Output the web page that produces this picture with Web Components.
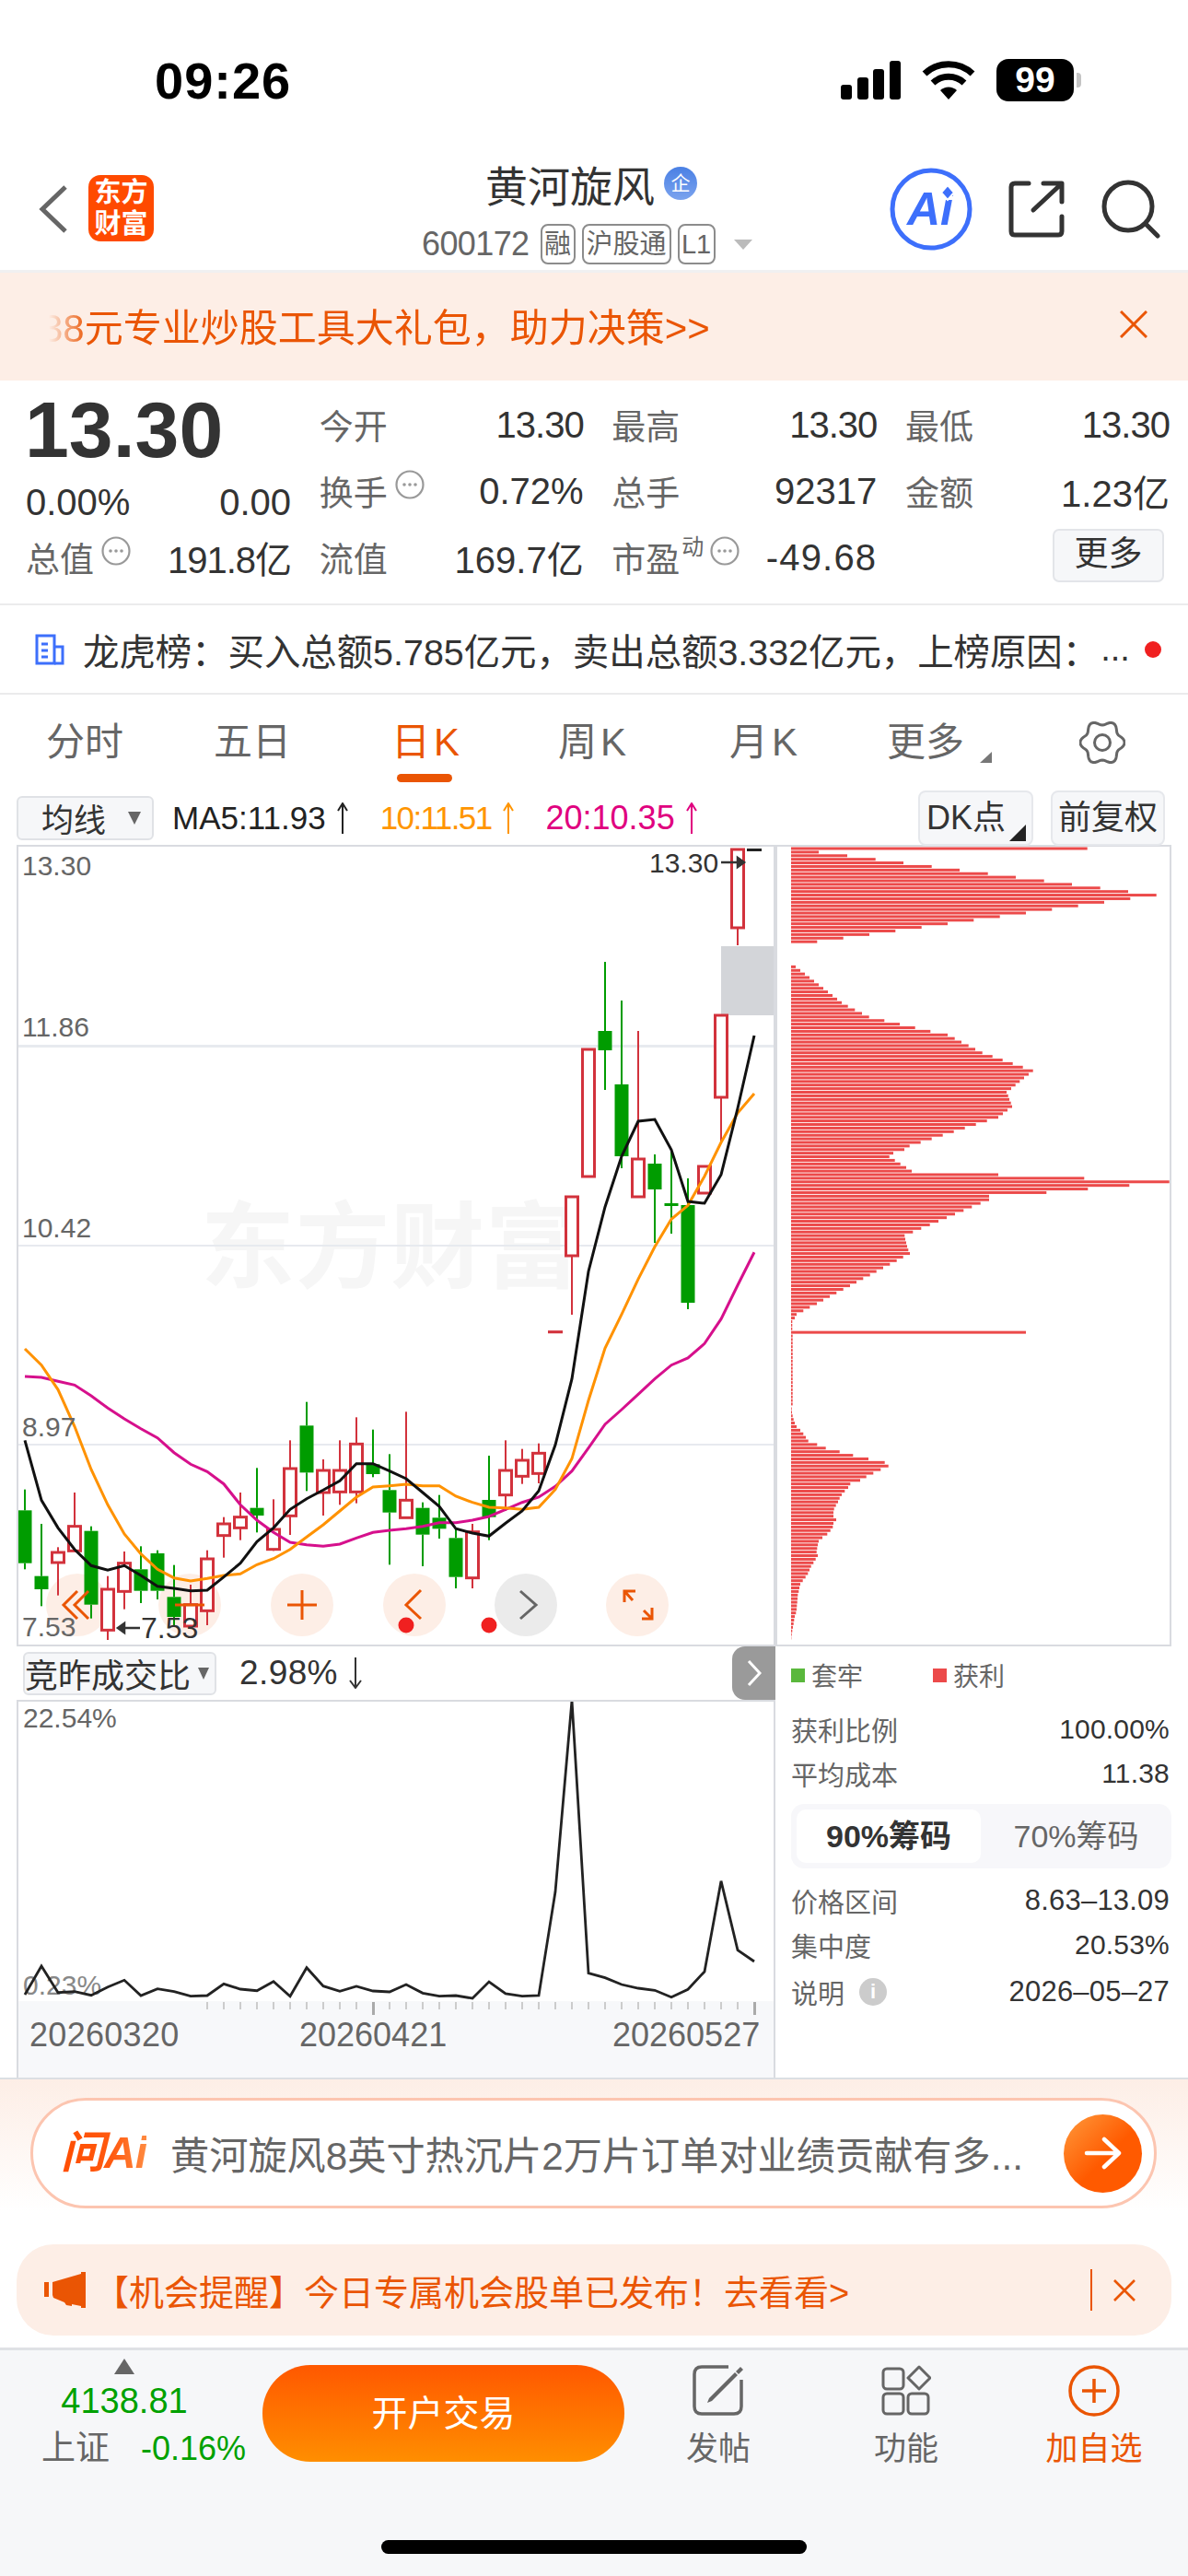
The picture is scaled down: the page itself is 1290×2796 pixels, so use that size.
<!DOCTYPE html>
<html lang="zh-CN">
<head>
<meta charset="utf-8">
<title>黄河旋风</title>
<style>
  html, body { margin: 0; padding: 0; background: #fff; }
  body {
    width: 1290px;
    height: 2796px;
    overflow: hidden;
    color: #333;
    font-family: "Liberation Sans", "Noto Sans CJK SC", sans-serif;
  }
</style>
</head>
<body>
<status-bar></status-bar>
<stock-header></stock-header>
<promo-banner></promo-banner>
<quote-panel></quote-panel>
<news-row></news-row>
<period-tabs></period-tabs>
<ma-toolbar></ma-toolbar>
<kline-area>
  <kline-chart slot="left"></kline-chart>
  <sub-toolbar slot="left"></sub-toolbar>
  <ratio-chart slot="left"></ratio-chart>
  <chip-chart slot="right"></chip-chart>
  <chip-stats slot="right"></chip-stats>
</kline-area>
<ask-ai></ask-ai>
<notice-bar></notice-bar>
<bottom-bar></bottom-bar>

<script>
class ShadowBox extends HTMLElement {
  constructor() {
    super();
    this.attachShadow({ mode: 'open' });
  }
  connectedCallback() {
    this.shadowRoot.innerHTML = this.getHTML();
  }
}

class StatusBar extends ShadowBox {
  getHTML() {
    return `
      <style>
        :host { display: flex; align-items: center; height: 160px; padding-top: 15px; box-sizing: border-box; }
        .time { margin-left: 168px; font-size: 56px; font-weight: 700; letter-spacing: 1px; line-height: 1; color: #000; }
        .right { margin-left: auto; margin-bottom: 2px; display: flex; align-items: center; }
        .signal { display: block; margin-right: 23px; }
        .wifi { display: block; margin-right: 23px; }
        .bat { width: 84px; height: 46px; border-radius: 13px; background: #000; color: #fff; font-size: 39px; font-weight: 700; display: flex; align-items: center; justify-content: center; }
        .nub { width: 5px; height: 16px; margin-left: 3px; margin-right: 116px; background: #c4c4c4; border-radius: 0 4px 4px 0; }
      </style>
      <div class="time">09:26</div>
      <div class="right">
        <svg class="signal" width="65" height="42" viewBox="0 0 65 42">
          <rect x="0" y="26" width="12" height="16" rx="3"/>
          <rect x="18" y="18" width="12" height="24" rx="3"/>
          <rect x="35" y="9" width="12" height="33" rx="3"/>
          <rect x="53" y="0" width="12" height="42" rx="3"/>
        </svg>
        <svg class="wifi" width="58" height="42" viewBox="0 0 58 42" fill="none" stroke="#000">
          <path d="M3 14 A38 38 0 0 1 55 14" stroke-width="7"/>
          <path d="M12 24 A25 25 0 0 1 46 24" stroke-width="7"/>
          <path d="M20 32 A13 13 0 0 1 38 32 L29 42 Z" fill="#000" stroke="none"/>
        </svg>
        <div class="bat">99</div>
        <div class="nub"></div>
      </div>
    `;
  }
}

class StockHeader extends ShadowBox {
  getHTML() {
    return `
      <style>
        :host { display: grid; grid-template-columns: 458px 368px 1fr; height: 136px; box-sizing: border-box; border-bottom: 3px solid #f0f0f1; }
        .left { display: flex; align-items: flex-start; }
        .back { display: block; margin: 40px 0 0 41px; }
        .logo { margin: 30px 0 0 22px; width: 71px; height: 72px; border-radius: 13px; background: #ff4a00; color: #fff; font-size: 29px; font-weight: 700; line-height: 34px; text-align: center; padding-top: 2px; box-sizing: border-box; }
        .mid { display: flex; flex-direction: column; align-items: center; }
        .name { display: flex; align-items: center; margin-top: 14px; height: 50px; font-size: 46px; color: #333; }
        .badge { width: 36px; height: 36px; margin-left: 10px; border-radius: 50%; background: linear-gradient(#4a80e4, #7ba3ee); color: #fff; font-size: 21px; line-height: 36px; text-align: center; }
        .sub { display: flex; align-items: center; width: 100%; margin-top: 19px; height: 44px; color: #666; }
        .code { font-size: 36px; margin-right: 12px; letter-spacing: -.6px; }
        .tag { height: 44px; box-sizing: border-box; border: 2px solid #8c8c8c; border-radius: 8px; font-size: 29px; line-height: 40px; text-align: center; margin-right: 7px; }
        .tri { margin-left: 13px; width: 0; height: 0; border-left: 10px solid transparent; border-right: 10px solid transparent; border-top: 11px solid #bbb; }
        .right { display: flex; align-items: flex-start; }
        .ic { display: block; margin-top: 22px; }
      </style>
      <div class="left">
        <svg class="back" width="33" height="54" viewBox="0 0 33 54" fill="none" stroke="#666" stroke-width="5"><path d="M30 3 L5 27 L30 51"/></svg>
        <div class="logo">东方<br>财富</div>
      </div>
      <div class="mid">
        <div class="name">黄河旋风<div class="badge">企</div></div>
        <div class="sub">
          <span class="code">600172</span>
          <span class="tag" style="width:38px">融</span>
          <span class="tag" style="width:97px">沪股通</span>
          <span class="tag" style="width:41px">L1</span>
          <span class="tri"></span>
        </div>
      </div>
      <div class="right">
        <svg class="ic" style="margin-left:140px" width="90" height="90" viewBox="966 182 90 90">
          <circle cx="1011" cy="227" r="42" fill="none" stroke="#3d6ffb" stroke-width="5"/>
          <text x="985" y="244" font-size="50" font-weight="700" font-style="italic" fill="#3d6ffb">Ai</text>
          <path d="M1029 201 L1036 209 L1029 217 L1022 209 Z" fill="#3d6ffb" stroke="#fff" stroke-width="2"/>
        </svg>
        <svg class="ic" style="margin-left:38px;margin-top:35px" width="64" height="64" viewBox="1094 195 64 64" fill="none" stroke="#333" stroke-width="5" stroke-linecap="round" stroke-linejoin="round">
          <path d="M1117 199 H1102 Q1098 199 1098 203 V251 Q1098 255 1102 255 H1149 Q1153 255 1153 251 V235"/>
          <path d="M1122 228 L1152 200 M1133 199 H1153 V219"/>
        </svg>
        <svg class="ic" style="margin-left:38px;margin-top:35px" width="66" height="66" viewBox="1198 195 66 66" fill="none" stroke="#333" stroke-width="5" stroke-linecap="round">
          <circle cx="1227" cy="224" r="26"/>
          <path d="M1247 244 L1259 256"/>
        </svg>
      </div>
    `;
  }
}

class PromoBanner extends ShadowBox {
  getHTML() {
    return `
      <style>
        :host { display: flex; align-items: center; height: 117px; background: #fdeee6; color: #ea5504; }
        .run { margin-left: 45px; margin-bottom: 5px; white-space: nowrap; font-size: 42px; -webkit-mask-image: linear-gradient(90deg, transparent 8px, #000 50px); mask-image: linear-gradient(90deg, transparent 8px, #000 50px); }
        svg { display: block; margin-left: auto; margin-right: 44px; margin-bottom: 5px; }
      </style>
      <span class="run">38元专业炒股工具大礼包，助力决策&gt;&gt;</span>
      <svg width="30" height="30" viewBox="0 0 30 30" fill="none" stroke="#ea5504" stroke-width="3"><path d="M1 1 L29 29 M29 1 L1 29"/></svg>
    `;
  }
}

class QuoteCell extends ShadowBox {
  getHTML() {
    const label = this.getAttribute('label');
    const value = this.getAttribute('value');
    const sup = this.getAttribute('sup');
    const info = this.hasAttribute('info');
    const ls = this.getAttribute('ls') || '0';
    return `
      <style>
        :host { display: flex; align-items: center; justify-content: space-between; height: 72px; }
        .l { display: flex; align-items: center; font-size: 37px; color: #666; }
        .v { font-size: 40px; color: #333; white-space: nowrap; letter-spacing: ${ls}px; }
        sup { font-size: 24px; line-height: 1; margin: 0 4px 22px 2px; color: #666; }
        svg { display: block; margin: 0 0 14px 8px; }
        sup + svg { margin-left: 3px; }
      </style>
      <span class="l">${label}${sup ? `<sup>${sup}</sup>` : ''}${info ? `
        <svg width="32" height="32" viewBox="0 0 32 32" fill="#999"><circle cx="16" cy="16" r="14.5" fill="none" stroke="#999" stroke-width="2.2"/><circle cx="10" cy="16" r="1.8"/><circle cx="16" cy="16" r="1.8"/><circle cx="22" cy="16" r="1.8"/></svg>` : ''}</span>
      <span class="v">${value}</span>
    `;
  }
}

class QuotePanel extends ShadowBox {
  getHTML() {
    return `
      <style>
        :host { display: grid; grid-template-columns: 288px 287px 288px 287px; column-gap: 30.67px; padding: 12px 20px 0 28px; height: 244px; box-sizing: border-box; border-bottom: 2px solid #ebebec; align-content: start; }
        .now { grid-row: 1 / 3; }
        .price { font-size: 86px; font-weight: 700; line-height: 84px; margin: -1px 0 1px -1px; color: #333; }
        .chg { display: flex; justify-content: space-between; margin-top: 15px; font-size: 40px; line-height: 44px; color: #333; }
        .more-cell { display: flex; align-items: flex-start; justify-content: flex-end; }
        .more { width: 121px; height: 58px; box-sizing: border-box; margin: 5px 6px 0 0; border: 2px solid #e3e5e9; border-radius: 7px; background: #f6f7f9; font-size: 37px; line-height: 52px; text-align: center; color: #333; }
      </style>
      <div class="now">
        <div class="price">13.30</div>
        <div class="chg"><span>0.00%</span><span>0.00</span></div>
      </div>
      <quote-cell label="今开" value="13.30" ls="-1"></quote-cell>
      <quote-cell label="最高" value="13.30" ls="-1"></quote-cell>
      <quote-cell label="最低" value="13.30" ls="-1"></quote-cell>
      <quote-cell label="换手" value="0.72%" info></quote-cell>
      <quote-cell label="总手" value="92317"></quote-cell>
      <quote-cell label="金额" value="1.23亿"></quote-cell>
      <quote-cell label="总值" value="191.8亿" info ls="-1"></quote-cell>
      <quote-cell label="流值" value="169.7亿"></quote-cell>
      <quote-cell label="市盈" sup="动" value="-49.68" info ls="1.2"></quote-cell>
      <div class="more-cell"><div class="more">更多</div></div>
    `;
  }
}

class NewsRow extends ShadowBox {
  getHTML() {
    return `
      <style>
        :host { display: flex; align-items: center; height: 97px; box-sizing: border-box; border-bottom: 2px solid #ebebec; padding-left: 37px; }
        svg { display: block; }
        .t { margin-left: 20px; font-size: 39.4px; color: #333; white-space: nowrap; }
        .dots { margin-left: 2px; font-size: 38px; color: #333; }
        .dot { width: 18px; height: 18px; margin-left: 16px; border-radius: 50%; background: #f02020; }
      </style>
      <svg width="33" height="34" viewBox="0 0 33 34" fill="none" stroke="#3d6ffb" stroke-width="3">
        <path d="M3 2 H22 V32 H3 Z"/><path d="M22 14 H31 V32 H22"/><path d="M8 11 H15 M8 18 H15 M8 25 H15"/>
      </svg>
      <span class="t">龙虎榜：买入总额5.785亿元，卖出总额3.332亿元，上榜原因：</span>
      <span class="dots">...</span>
      <span class="dot"></span>
    `;
  }
}

class PeriodTabs extends ShadowBox {
  getHTML() {
    // gear outline built from a wavy circle with 6 lobes
    const pts = [];
    for (let a = 0; a < 360; a += 5) {
      const t = a * Math.PI / 180;
      const r = 21.5 - 2.6 * Math.cos(6 * t);
      pts.push((25 + r * Math.sin(t)).toFixed(1) + ',' + (24 - r * Math.cos(t)).toFixed(1));
    }
    return `
      <style>
        :host { display: grid; grid-template-columns: 184px 180px 200px 162px 210px 138px 216px; height: 104px; align-items: center; font-size: 42px; color: #666; }
        div { position: relative; text-align: center; height: 104px; line-height: 104px; }
        .k { letter-spacing: 4px; }
        .on { color: #ea5504; }
        .on::after { content: ""; position: absolute; left: 67px; bottom: 9px; width: 60px; height: 9px; border-radius: 5px; background: #ea5504; }
        .tri { position: absolute; left: 128px; top: 62px; width: 0; height: 0; border-left: 13px solid transparent; border-bottom: 12px solid #777; }
        svg { position: absolute; left: 98px; top: 28px; }
      </style>
      <div>分时</div>
      <div>五日</div>
      <div class="on k">日K</div>
      <div class="k">周K</div>
      <div class="k">月K</div>
      <div>更多<span class="tri"></span></div>
      <div>
        <svg width="50" height="48" viewBox="0 0 50 48" fill="none" stroke="#666" stroke-width="3">
          <polygon points="${pts.join(' ')}"/><circle cx="25" cy="24" r="8.5"/>
        </svg>
      </div>
    `;
  }
}

const upArrow = (c) => `<svg class="arr" width="16" height="34" viewBox="0 0 16 34" fill="none" stroke="${c}" stroke-width="2"><path d="M8 34 V2 M3 9 L8 1 L13 9"/></svg>`;

class MaToolbar extends ShadowBox {
  getHTML() {
    return `
      <style>
        :host { display: flex; align-items: center; height: 59px; padding-left: 18px; font-size: 35px; color: #222; box-sizing: border-box; }
        .sel { display: flex; align-items: center; width: 149px; height: 48px; box-sizing: border-box; border: 2px solid #e0e2e6; border-radius: 6px; background: #f6f7f9; padding-left: 25px; font-size: 35px; color: #333; margin-right: 20px; }
        .sel i { margin-left: 24px; border-left: 7px solid transparent; border-right: 7px solid transparent; border-top: 14px solid #666; }
        .ma { display: flex; align-items: center; white-space: nowrap; }
        .arr { display: block; margin-left: 10px; }
        .btn { position: relative; align-self: flex-start; height: 60px; box-sizing: border-box; border: 2px solid #e6e8ec; border-radius: 8px; background: #f6f7f9; font-size: 36px; line-height: 56px; text-align: center; color: #333; }
        .btn b { position: absolute; right: 6px; bottom: 3px; width: 0; height: 0; border-left: 18px solid transparent; border-bottom: 18px solid #222; }
      </style>
      <div class="sel">均线<i></i></div>
      <div class="ma"><span>MA5:11.93</span>${upArrow('#222')}</div>
      <div class="ma" style="color:#ff9500;margin-left:33px"><span style="letter-spacing:-1.6px">10:11.51</span>${upArrow('#ff9500')}</div>
      <div class="ma" style="color:#e0007f;margin-left:33px"><span style="font-size:36px">20:10.35</span>${upArrow('#e0007f')}</div>
      <div class="btn" style="width:125px;margin-left:auto;text-align:left;padding-left:7px">DK点<b></b></div>
      <div class="btn" style="width:124px;margin:0 25px 0 19px">前复权</div>
    `;
  }
}

class KlineArea extends ShadowBox {
  getHTML() {
    return `
      <style>
        :host { display: grid; grid-template-columns: 824px 430px; padding-left: 18px; height: 1340px; box-sizing: border-box; border-bottom: 2px solid #dcdfe3; }
        .col { display: flex; flex-direction: column; min-width: 0; }
      </style>
      <div class="col"><slot name="left"></slot></div>
      <div class="col"><slot name="right"></slot></div>
    `;
  }
}

// candle values read off the chart, [up?, high, top, bottom, low] on the page y axis
const zy = (y) => 1300 + y / 3;
const R = 1, G = 0;
const lowCandles = [
  [G,950,1018,1190,1210],[G,1062,1232,1275,1330],[R,1138,1155,1188,1295],[R,960,1070,1150,1150],
  [G,1070,1085,1325,1370],[R,1232,1275,1408,1440],[R,1152,1190,1282,1340],[G,1135,1210,1280,1320],
  [G,1148,1158,1280,1308],[G,1196,1300,1365,1395],[R,1260,1325,1395,1395],[R,1148,1176,1345,1392],
  [R,1040,1062,1100,1172],[R,960,1040,1075,1115],[G,880,1010,1035,1090],[R,982,1080,1145,1150],
  [R,790,882,1036,1098],[G,665,742,895,955],[R,852,888,960,1035],[R,790,888,958,1000],
  [R,715,802,958,995],[G,755,868,900,910],[G,835,952,1025,1195],[R,697,985,1042,1042],
  [G,992,1010,1097,1200],[G,968,1042,1078,1110],[G,1080,1108,1235,1272],[R,1062,1088,1238,1272],
  [G,840,984,1040,1115],[R,790,888,968,1020],[R,818,855,907,932],[R,800,832,898,930],
  [R,437,437,437,437]
].map(c => [c[0], zy(c[1]), zy(c[2]), zy(c[3]), zy(c[4])]);
const highCandles = [
  [R,1299,1299,1363,1427],[R,1139,1139,1277,1277],[G,1044,1119,1140,1183],[G,1086,1177,1255,1268],
  [R,1119,1258,1299,1299],[G,1253,1263,1291,1349],[G,1250,1306,1308,1339],[G,1279,1308,1414,1421],
  [R,1266,1266,1295,1295],[R,1102,1102,1191,1240],[R,922,922,1007,1026]
];
const candles = lowCandles.concat(highCandles);
const colX = (i) => 27 + 18 * i;

const ma5 = [790,985,1075,1145,1198,1213,1198,1230,1265,1272,1280,1278,1235,1190,1120,1075,1015,980,952,922,866,866,890,915,960,1005,1078,1092,1102,1060,1020,955,805,590,240,30,-135,-249,-255,-156,12,18,-75,-291,-528];
const ma10 = [492,545,625,745,885,1000,1095,1160,1210,1238,1248,1240,1230,1225,1195,1175,1145,1105,1065,1020,975,942,938,933,938,938,972,992,1008,1010,1015,1008,950,850,660,490,380,265,160,70,25,-70,-180,-276,-339];
const ma20 = [582,585,598,610,645,685,720,752,782,830,868,892,932,1000,1050,1090,1122,1130,1135,1128,1108,1090,1083,1078,1070,1058,1058,1050,1038,1015,992,975,940,890,815,738,690,640,590,545,522,475,395,285,178];
const linePts = (arr) => arr.map((y, i) => colX(i) + ',' + zy(y).toFixed(1)).join(' ');

class KlineChart extends ShadowBox {
  getHTML() {
    const red = '#d2323c', green = '#009c00';
    const bars = candles.map((c, i) => {
      const x = colX(i), col = c[0] ? red : green;
      let s = '';
      if (c[1] < c[2]) s += `<rect x="${x - 1}" y="${c[1]}" width="2" height="${c[2] - c[1]}" fill="${col}"/>`;
      if (c[4] > c[3]) s += `<rect x="${x - 1}" y="${c[3]}" width="2" height="${c[4] - c[3]}" fill="${col}"/>`;
      if (c[0]) s += `<rect x="${x - 6.5}" y="${c[2]}" width="13" height="${Math.max(c[3] - c[2], .1)}" fill="#fff" stroke="${col}" stroke-width="3"/>`;
      else s += `<rect x="${x - 7.5}" y="${c[2]}" width="15" height="${Math.max(c[3] - c[2], 3)}" fill="${col}"/>`;
      return s;
    }).join('');
    return `
      <style>
        :host { display: block; width: 824px; height: 870px; box-sizing: border-box; border: 2px solid #d9dbe0; overflow: hidden; }
        svg { display: block; }
        text { font-family: "Liberation Sans", "Noto Sans CJK SC", sans-serif; }
      </style>
      <svg width="820" height="866" viewBox="20 919 820 866">
        <text x="218" y="1390" font-size="102" font-weight="700" letter-spacing="1" fill="#f6f6f6">东方财富</text>
        <g fill="#e7eaef">
          <rect x="20" y="1134" width="820" height="3"/>
          <rect x="20" y="1351" width="820" height="2"/>
          <rect x="20" y="1567" width="820" height="2"/>
        </g>
        <rect x="783" y="1027" width="58" height="75" fill="#d3d5d9"/>
        <g fill="#fdeee6">
          <circle cx="84" cy="1742" r="34"/><circle cx="206" cy="1742" r="34"/>
          <circle cx="328" cy="1742" r="34"/><circle cx="450" cy="1742" r="34"/>
          <circle cx="571" cy="1742" r="34" fill="#ebebeb"/><circle cx="692" cy="1742" r="34"/>
        </g>
        ${bars}
        <rect x="811" y="921" width="16" height="3" fill="#222"/>
        <polyline points="${linePts(ma20)}" fill="none" stroke="#d6108c" stroke-width="3"/>
        <polyline points="${linePts(ma10)}" fill="none" stroke="#ff9200" stroke-width="3"/>
        <polyline points="${linePts(ma5)}" fill="none" stroke="#111" stroke-width="3"/>
        <g font-size="30" fill="#666">
          <text x="24" y="950">13.30</text>
          <text x="24" y="1125">11.86</text>
          <text x="24" y="1343">10.42</text>
          <text x="24" y="1559">8.97</text>
          <text x="24" y="1776">7.53</text>
        </g>
        <text x="705" y="947" font-size="30" fill="#333">13.30</text>
        <path d="M783 936 H808 M801 931 L808 936 L801 941 Z" fill="#333" stroke="#333" stroke-width="2.5"/>
        <text x="153" y="1778" font-size="32" fill="#333">7.53</text>
        <path d="M152 1767 H128 M135 1762 L128 1767 L135 1772 Z" fill="#333" stroke="#333" stroke-width="2.5"/>
        <g fill="none" stroke="#ea5504" stroke-width="3">
          <path d="M84 1727 L69 1742 L84 1757 M96 1727 L81 1742 L96 1757"/>
          <path d="M190 1742 H222"/>
          <path d="M328 1726 V1758 M312 1742 H344"/>
          <path d="M457 1726 L441 1742 L457 1757"/>
          <path d="M678 1739 V1727 H690 M679 1728 L687 1737 M708 1745 V1757 H697 M699 1748 L707 1756"/>
        </g>
        <path d="M565 1727 L582 1742 L565 1757" fill="none" stroke="#666" stroke-width="3"/>
        <circle cx="441" cy="1764" r="8.5" fill="#f02020"/>
        <circle cx="531" cy="1764" r="8.5" fill="#f02020"/>
      </svg>
    `;
  }
}

class SubToolbar extends ShadowBox {
  getHTML() {
    return `
      <style>
        :host { display: flex; align-items: center; height: 58px; position: relative; color: #333; }
        .sel { display: flex; align-items: center; width: 210px; height: 47px; box-sizing: border-box; margin-left: 7px; border: 2px solid #e0e2e6; border-radius: 6px; background: #f6f7f9; font-size: 36px; white-space: nowrap; }
        .sel i { margin-left: 8px; border-left: 6.5px solid transparent; border-right: 6.5px solid transparent; border-top: 13px solid #666; }
        .val { margin-left: 25px; font-size: 37px; letter-spacing: .4px; }
        svg { display: block; margin-left: 10px; }
        .tab { margin-left: auto; width: 47px; height: 58px; border-radius: 14px 0 0 14px; background: #9a9a9a; display: flex; align-items: center; justify-content: center; }
        .tab svg { margin: 0; }
      </style>
      <div class="sel">竞昨成交比<i></i></div>
      <span class="val">2.98%</span>
      <svg width="18" height="34" viewBox="0 0 18 34" fill="none" stroke="#333" stroke-width="2"><path d="M9 0 V32 M3 25 L9 33 L15 25"/></svg>
      <div class="tab"><svg width="16" height="30" viewBox="0 0 16 30" fill="none" stroke="#fff" stroke-width="3"><path d="M2 2 L14 15 L2 28"/></svg></div>
    `;
  }
}

class RatioChart extends ShadowBox {
  getHTML() {
    const ys = [1155,1062,1148,1145,1157,1130,1108,1158,1136,1145,1160,1158,1120,1137,1142,1112,1160,1067,1127,1144,1128,1143,1146,1122,1150,1160,1158,1167,1113,1152,1160,1158,820,197,1085,1100,1122,1134,1141,1163,1138,1080,785,1010,1047];
    const pts = ys.map((y, i) => colX(i) + ',' + (1780 + y / 3).toFixed(1)).join(' ');
    let ticks = '';
    for (let i = 11; i < 45; i++) {
      const major = i === 21 || i === 44;
      ticks += `<rect x="${colX(i) - 1}" y="2173" width="${major ? 3 : 2}" height="${major ? 14 : 8}" fill="${major ? '#aaa' : '#ccc'}"/>`;
    }
    return `
      <style>
        :host { display: block; width: 824px; height: 410px; box-sizing: border-box; border: 2px solid #d9dbe0; border-bottom: 0; }
        svg { display: block; }
        text { font-family: "Liberation Sans", sans-serif; }
      </style>
      <svg width="820" height="408" viewBox="20 1847 820 408">
        <rect x="18" y="2172" width="824" height="84" fill="#f7f8fa"/>
        ${ticks}
        <text x="25" y="1875" font-size="30" fill="#666">22.54%</text>
        <text x="25" y="2165" font-size="30" fill="#888">0.23%</text>
        <polyline points="${pts}" fill="none" stroke="#222" stroke-width="2.8"/>
        <g font-size="36" fill="#666">
          <text x="32" y="2221" letter-spacing=".3">20260320</text>
          <text x="325" y="2221">20260421</text>
          <text x="665" y="2221">20260527</text>
        </g>
      </svg>
    `;
  }
}

class ChipChart extends ShadowBox {
  getHTML() {
    // bar ends as read from the profile, in rows 3.89px apart
    const top = [1025,150,243,335,426,518,609,701,792,884,975,1067,1158,1250,1165,1080,995,910,825,740,655,570,485,400,315,230,145,0,0,0,0,0,0];
    const mid = [75,90,105,120,135,150,165,180,195,210,225,245,268,291,314,364,414,464,514,570,593,615,638,660,683,716,749,782,815,848,834,819,805,791,777,762,767,771,776,780,765,750,735,698,662,626,590,554,518,482,446,429,393,380,398,416,435,453,735,1015,1292,1162,1027,892,705,705,677,649,622,594,567,540,512,484,457,430,432,435,438,442,447,425,404,382,360,338,317,295,273,252,230,208,186,165,144,121,100,78,72,64,64,64,825];
    const thin = new Array(20).fill(65);
    const low = [62,63,65,68,72,78,90,100,108,116,145,173,218,262,312,365,377,352,328,305,285,253,246,235,225,218,213,206,200,198,198,207,198,196,188,178,162,150,147,145,143,147,140,133,125,120,115,107,98,90,87,85,82,81,80,79,78,76,72,70,68,66,64,62,61];
    let rows = '';
    top.concat(mid, thin).forEach((w, i) => {
      if (!w) return;
      const y = 921 + i * 3.89 - 1.5;
      rows += `<rect x="860" y="${y.toFixed(2)}" width="${((w - 60) / 3).toFixed(1)}" height="3" />`;
    });
    low.forEach((w, i) => {
      const y = 1529 + i * 3.89 - 1.5;
      rows += `<rect x="860" y="${y.toFixed(2)}" width="${((w - 60) / 3).toFixed(1)}" height="3"/>`;
    });
    return `
      <style>
        :host { display: block; width: 430px; height: 870px; box-sizing: border-box; border: 2px solid #d9dbe0; overflow: hidden; }
        svg { display: block; }
      </style>
      <svg width="426" height="866" viewBox="845 919 426 866" fill="#ec4a4a">${rows}</svg>
    `;
  }
}

class ChipStats extends ShadowBox {
  getHTML() {
    return `
      <style>
        :host { display: block; padding-left: 17px; width: 430px; box-sizing: border-box; font-size: 29px; color: #666; }
        .legend { display: flex; align-items: center; height: 40px; margin-top: 11px; font-size: 28px; }
        .legend i { width: 15px; height: 15px; margin-right: 7px; }
        .legend span { width: 132px; }
        .row { display: flex; justify-content: space-between; align-items: center; height: 48px; padding-right: 2px; }
        .row b { font-weight: 400; font-size: 30px; color: #333; letter-spacing: .2px; }
        .row b.w { font-size: 31px; }
        .seg { display: grid; grid-template-columns: 200px 1fr; margin: 9px 0 11px; height: 70px; box-sizing: border-box; padding: 6px 0 6px 6px; border-radius: 14px; background: #f7f7fa; font-size: 34px; }
        .seg div { line-height: 58px; text-align: center; white-space: nowrap; }
        .seg .on { background: #fff; border-radius: 10px; color: #333; font-weight: 700; }
        .tip { display: inline-block; width: 30px; height: 30px; margin-left: 16px; border-radius: 50%; background: #ccc; color: #fff; font-size: 22px; font-weight: 700; line-height: 30px; text-align: center; }
        .l { display: flex; align-items: center; }
      </style>
      <div class="legend"><i style="background:#5ab83c"></i><span>套牢</span><i style="background:#ec4a4a"></i><span>获利</span></div>
      <div class="row" style="margin-top:15px"><span>获利比例</span><b>100.00%</b></div>
      <div class="row"><span>平均成本</span><b>11.38</b></div>
      <div class="seg"><div class="on">90%筹码</div><div>70%筹码</div></div>
      <div class="row"><span>价格区间</span><b class="w">8.63–13.09</b></div>
      <div class="row"><span>集中度</span><b>20.53%</b></div>
      <div class="row" style="margin-top:3px"><span class="l">说明<span class="tip">i</span></span><b class="w">2026–05–27</b></div>
    `;
  }
}

class AskAi extends ShadowBox {
  getHTML() {
    return `
      <style>
        :host { display: block; height: 179px; box-sizing: border-box; padding: 20px 34px 0 33px; background: linear-gradient(#fdeee6, #fff 80%); }
        .pill { display: flex; align-items: center; height: 120px; box-sizing: border-box; border: 3px solid #fcc5b0; border-radius: 60px; background: #fff; padding-left: 30px; }
        .logo { font-size: 48px; font-weight: 700; font-style: italic; line-height: 60px; letter-spacing: -1px; background: linear-gradient(90deg, #ff4d00, #ff5a10 60%, #ff8a40); -webkit-background-clip: text; background-clip: text; color: transparent; }
        .t { margin-left: 26px; margin-bottom: 2px; font-size: 42.2px; color: #666; white-space: nowrap; }
        .go { margin-left: auto; margin-right: 13px; width: 85px; height: 85px; border-radius: 50%; background: linear-gradient(135deg, #ff9a3c, #ff5a00 55%); display: flex; align-items: center; justify-content: center; }
      </style>
      <div class="pill">
        <span class="logo">问Ai</span>
        <span class="t">黄河旋风8英寸热沉片2万片订单对业绩贡献有多...</span>
        <div class="go"><svg width="42" height="36" viewBox="0 0 42 36" fill="none" stroke="#fff" stroke-width="4.5" stroke-linecap="round" stroke-linejoin="round"><path d="M3 18 H38 M22 3 L38 18 L22 33"/></svg></div>
      </div>
    `;
  }
}

class NoticeBar extends ShadowBox {
  getHTML() {
    return `
      <style>
        :host { display: flex; align-items: center; height: 99px; margin: 0 18px 13px; border-radius: 40px; background: #fdeee6; color: #ea5504; padding-left: 30px; white-space: nowrap; }
        svg { display: block; }
        .t { margin-left: 8px; font-size: 38px; }
        .bar { margin-left: auto; width: 2px; height: 45px; background: #ea5504; }
        .x { margin: 0 39px 0 23px; }
      </style>
      <svg width="46" height="40" viewBox="0 0 46 40" fill="#ea5504">
        <rect x="0" y="11" width="5" height="16"/>
        <path d="M9 11 L40 2 V0 H45 V39 H40 V37 L30 35 V37 L24 36 L22 33 L10 28 L9 25 Z"/>
      </svg>
      <span class="t">【机会提醒】今日专属机会股单已发布！去看看&gt;</span>
      <span class="bar"></span>
      <svg class="x" width="24" height="24" viewBox="0 0 24 24" fill="none" stroke="#ea5504" stroke-width="2.6"><path d="M1 1 L23 23 M23 1 L1 23"/></svg>
    `;
  }
}

class ToolItem extends ShadowBox {
  getHTML() {
    const on = this.hasAttribute('active');
    return `
      <style>
        :host { display: flex; flex-direction: column; align-items: center; padding-top: 16px; color: ${on ? '#ea5504' : '#666'}; }
        .ic { height: 55px; margin-bottom: 14px; }
        .lb { font-size: 35px; line-height: 44px; }
      </style>
      <div class="ic"><slot></slot></div>
      <div class="lb">${this.getAttribute('label')}</div>
    `;
  }
}

class BottomBar extends ShadowBox {
  getHTML() {
    return `
      <style>
        :host { display: flex; flex-direction: column; height: 248px; box-sizing: border-box; border-top: 3px solid #dfe1e5; background: #f6f7f9; }
        .row { display: flex; }
        .idx { margin-left: 45px; width: 222px; white-space: nowrap; }
        .tri { margin: 9px 0 0 79px; width: 0; height: 0; border-left: 11px solid transparent; border-right: 11px solid transparent; border-bottom: 17px solid #666; }
        .num { width: 180px; margin-top: 7px; text-align: center; font-size: 38px; line-height: 44px; color: #00a100; }
        .lo { display: flex; justify-content: space-between; margin-top: 8px; line-height: 44px; }
        .lo span:first-child { font-size: 37px; color: #666; }
        .lo span:last-child { font-size: 36px; color: #00a100; }
        .btn { margin: 16px 0 0 18px; width: 393px; height: 105px; border-radius: 52px; background: linear-gradient(#ff5800, #ff8e00); color: #fff; font-size: 39px; line-height: 105px; text-align: center; }
        .tools { display: grid; grid-template-columns: repeat(3, 204px); }
        .home { margin: auto auto 24px; width: 462px; height: 15px; border-radius: 8px; background: #000; }
      </style>
      <div class="row">
        <div class="idx">
          <div class="tri"></div>
          <div class="num">4138.81</div>
          <div class="lo"><span>上证</span><span>-0.16%</span></div>
        </div>
        <div class="btn">开户交易</div>
        <div class="tools">
          <tool-item label="发帖">
            <svg width="56" height="55" viewBox="0 0 56 55" fill="none" stroke="#666" stroke-width="3.5">
              <path d="M39 2 H10 Q2 2 2 10 V45 Q2 53 10 53 H45 Q53 53 53 45 V16"/>
              <path d="M18 36 L46 8 L49 11 L21 39 L16 41 Z" fill="#666" stroke="none"/>
              <path d="M47 7 L52 2 L55 5 L50 10 Z" fill="#666" stroke="none"/>
            </svg>
          </tool-item>
          <tool-item label="功能">
            <svg width="54" height="55" viewBox="0 0 54 55" fill="none" stroke="#666" stroke-width="3">
              <rect x="2" y="4" width="22" height="22" rx="4"/>
              <rect x="2" y="31" width="22" height="22" rx="4"/>
              <rect x="29" y="31" width="22" height="22" rx="4"/>
              <path d="M41 2 L53 14 L41 26 L29 14 Z" stroke-linejoin="round"/>
            </svg>
          </tool-item>
          <tool-item label="加自选" active>
            <svg width="56" height="56" viewBox="0 0 56 56" fill="none" stroke="#ea5504" stroke-width="3.5">
              <circle cx="28" cy="28" r="26"/><path d="M28 15 V41 M15 28 H41"/>
            </svg>
          </tool-item>
        </div>
      </div>
      <div class="home"></div>
    `;
  }
}

customElements.define('status-bar', StatusBar);
customElements.define('stock-header', StockHeader);
customElements.define('promo-banner', PromoBanner);
customElements.define('quote-cell', QuoteCell);
customElements.define('quote-panel', QuotePanel);
customElements.define('news-row', NewsRow);
customElements.define('period-tabs', PeriodTabs);
customElements.define('ma-toolbar', MaToolbar);
customElements.define('kline-area', KlineArea);
customElements.define('kline-chart', KlineChart);
customElements.define('sub-toolbar', SubToolbar);
customElements.define('ratio-chart', RatioChart);
customElements.define('chip-chart', ChipChart);
customElements.define('chip-stats', ChipStats);
customElements.define('ask-ai', AskAi);
customElements.define('notice-bar', NoticeBar);
customElements.define('tool-item', ToolItem);
customElements.define('bottom-bar', BottomBar);
</script>
</body>
</html>
